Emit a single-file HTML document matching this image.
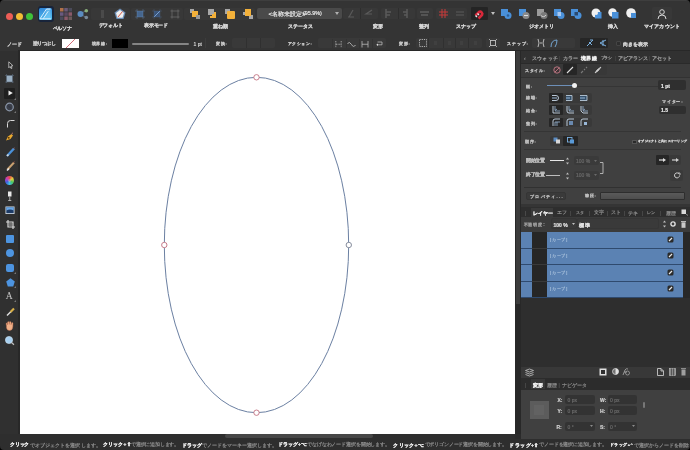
<!DOCTYPE html>
<html><head><meta charset="utf-8">
<style>
*{margin:0;padding:0;box-sizing:border-box}
html,body{width:690px;height:450px;overflow:hidden;background:#2b2b2b}
body{position:relative;font-family:"Liberation Sans",sans-serif;color:#d8d8d8}
#root{position:absolute;left:0;top:0;width:690px;height:450px;will-change:transform}
.a{position:absolute}
svg{position:absolute;overflow:visible}
.lbl{position:absolute;white-space:nowrap;font-size:5px;line-height:6px;color:#d6d6d6;font-weight:bold}
.tx{position:absolute;white-space:nowrap;font-size:5px;line-height:6px;color:#c8c8c8}
.grp{position:absolute;background:#3a3a3a;border-radius:2px}
.dk{position:absolute;background:#252525;border-radius:1px}
.st{top:441.6px;white-space:nowrap;font-size:5px;line-height:6px;color:#8e8e8e}
.b1{font-weight:bold;color:#f0f0f0}
.lbl,.tx,.st{-webkit-text-stroke:0.2px currentColor}
.fld{position:absolute;background:#303030;border-radius:2px}
</style></head><body><div id="root">

<!-- ================= TOP TOOLBAR ================= -->
<div class="a" style="left:0;top:0;width:690px;height:51px;background:#343434"></div>
<div class="a" style="left:0;top:0;width:690px;height:1px;background:#3e3e3e"></div>
<!-- window corners -->
<svg style="left:0;top:0" width="4" height="4"><path d="M0 0 H4 A4 4 0 0 0 0 4 Z" fill="#000"/></svg>
<svg style="left:686px;top:0" width="4" height="4"><path d="M4 0 H0 A4 4 0 0 1 4 4 Z" fill="#000"/></svg>
<!-- traffic lights -->
<div class="a" style="left:6px;top:13px;width:7px;height:7px;border-radius:50%;background:#ed5d56"></div>
<div class="a" style="left:16px;top:13px;width:7px;height:7px;border-radius:50%;background:#f3bd35"></div>
<div class="a" style="left:26px;top:13px;width:7px;height:7px;border-radius:50%;background:#3fc13a"></div>
<!-- app icon -->
<div class="a" style="left:37.6px;top:6px;width:16.2px;height:15.8px;border-radius:3px;background:#18243a"></div>
<div class="a" style="left:39.1px;top:7.6px;width:12.7px;height:12.1px;border-radius:1.5px;background:linear-gradient(170deg,#2f86d8,#58c4f2)"></div>
<svg style="left:39.1px;top:7.6px" width="13" height="12"><path d="M7.5 1 H11.5 V10.8 H5 Z" fill="#7fd0f8" opacity="0.55"/><path d="M1 10.8 L7.5 1 H11.5 M4 10.8 L9.3 3.2 M1 10.8 H11.8" stroke="#e6f6ff" stroke-width="0.9" fill="none"/></svg>

<!-- persona grid -->
<svg style="left:60px;top:8px" width="12" height="12">
<rect x="0" y="0" width="3.5" height="3.5" fill="#b0704a"/><rect x="4.3" y="0" width="3.5" height="3.5" fill="#6a5a78"/><rect x="8.5" y="0" width="3.5" height="3.5" fill="#4a4a5a"/>
<rect x="0" y="4.3" width="3.5" height="3.5" fill="#6a5a80"/><rect x="4.3" y="4.3" width="3.5" height="3.5" fill="#5a4a60"/><rect x="8.5" y="4.3" width="3.5" height="3.5" fill="#8a5a6a"/>
<rect x="0" y="8.5" width="3.5" height="3.5" fill="#4a4a5a"/><rect x="4.3" y="8.5" width="3.5" height="3.5" fill="#8a5a6a"/><rect x="8.5" y="8.5" width="3.5" height="3.5" fill="#6a5a5a"/>
</svg>
<!-- share -->
<svg style="left:77px;top:8px" width="12" height="12">
<path d="M3.5 6 L9 2.5 M3.5 6 L9 9.5" stroke="#5a6a78" stroke-width="1"/>
<circle cx="3.5" cy="6" r="3" fill="#5a8cc0"/><circle cx="9.3" cy="2.7" r="1.8" fill="#8ab07a"/><circle cx="9.3" cy="9.5" r="1.8" fill="#7a8a98"/>
</svg>
<!-- default group -->
<div class="grp" style="left:91px;top:8px;width:39px;height:12px;background:#383838"></div>
<div class="a" style="left:101px;top:10px;width:3px;height:8px;background:#4a4a4a"></div>
<svg style="left:114px;top:7.5px" width="12" height="12">
<path d="M6 0.5 L11.5 4.5 L9.5 11 L2.5 11 L0.5 4.5 Z" fill="#6d8fb8"/>
<path d="M6 2 L10 5 L8.6 9.8 L3.4 9.8 L2 5 Z" fill="#f0f0f0"/>
<path d="M4 9 L8.5 3.5" stroke="#d85a4a" stroke-width="1"/>
</svg>
<!-- view mode -->
<div class="grp" style="left:131px;top:8px;width:52px;height:12px;background:#383838"></div>
<svg style="left:134.5px;top:8.5px" width="10" height="10">
<rect x="2" y="2" width="6" height="6" fill="#46668e"/>
<path d="M0.5 2 H9.5 M0.5 8 H9.5 M2 0.5 V9.5 M8 0.5 V9.5" stroke="#6a90c0" stroke-width="0.7" stroke-dasharray="1 1"/>
</svg>
<svg style="left:151.5px;top:8.5px" width="10" height="10">
<rect x="2" y="2" width="6" height="6" fill="#3a5478"/>
<path d="M2 8 L8 2" stroke="#7aa0d0" stroke-width="1"/>
<path d="M0.5 2 H9.5 M0.5 8 H9.5 M2 0.5 V9.5 M8 0.5 V9.5" stroke="#50709a" stroke-width="0.6" stroke-dasharray="1 1"/>
</svg>
<svg style="left:169.5px;top:8.5px" width="10" height="10">
<path d="M0.5 2 H9.5 M0.5 8 H9.5 M2 0.5 V9.5 M8 0.5 V9.5" stroke="#6a6a6a" stroke-width="0.8"/>
</svg>

<!-- arrange -->
<div class="grp" style="left:184px;top:7.5px;width:71px;height:12px;background:#383838"></div>
<svg style="left:190px;top:9px" width="10" height="10">
<rect x="0" y="0" width="4" height="4" fill="#a8a8a8"/><rect x="2" y="2" width="6" height="6" fill="#f3b13a"/><rect x="6" y="6" width="4" height="4" fill="#9a9a9a"/>
</svg>
<svg style="left:208px;top:9px" width="10" height="10">
<rect x="0" y="0" width="6" height="6" fill="#a8a8a8"/><path d="M7 3 V8 H2" stroke="#f3b13a" stroke-width="2" fill="none"/><rect x="4" y="5" width="4" height="3" fill="#f3b13a"/>
</svg>
<svg style="left:225px;top:9px" width="10" height="10">
<rect x="0" y="0" width="5" height="5" fill="#a8a8a8"/><rect x="2" y="2" width="8" height="8" rx="1" fill="#f3b13a"/>
</svg>
<svg style="left:243px;top:9px" width="10" height="10">
<rect x="2" y="0" width="6" height="6" fill="#f3b13a"/><rect x="0" y="3" width="3" height="3" fill="#a8a8a8"/><rect x="6" y="6" width="4" height="4" fill="#a8a8a8"/><rect x="2" y="2" width="6" height="5" fill="#f3b13a"/>
</svg>

<!-- document dropdown -->
<div class="a" style="left:257px;top:8px;width:85px;height:11px;background:#4a4a4a;border-radius:2px"></div>
<div class="tx" style="font-size:6px;left:268.6px;top:10.8px;color:#e4e4e4;">&lt;名称未設定&gt;</div>
<div class="tx" style="font-size:5.4px;left:303px;top:10.2px;color:#e4e4e4;">(95.9%)</div>
<svg style="left:335px;top:12px" width="4" height="3"><path d="M0 0 H4 L2 3 Z" fill="#b0b0b0"/></svg>

<!-- transform (dim) -->
<div class="grp" style="left:343px;top:8px;width:35px;height:11px;background:#383838"></div>
<div class="a" style="left:360px;top:8px;width:1px;height:11px;background:#2e2e2e"></div>
<svg style="left:347px;top:9px" width="8" height="9"><path d="M6 1 L2 8 M1 8 H7" stroke="#5a5a5a" stroke-width="1.2"/></svg>
<svg style="left:365px;top:9px" width="8" height="9"><path d="M7 1 L1 5 L7 5" stroke="#5a5a5a" stroke-width="1.2" fill="none"/></svg>
<div class="grp" style="left:381px;top:8px;width:34px;height:11px;background:#383838"></div>
<div class="a" style="left:398px;top:8px;width:1px;height:11px;background:#2e2e2e"></div>
<svg style="left:384px;top:9px" width="8" height="9"><path d="M2 0 V9 M2 3 H7 M2 6 H6" stroke="#5a5a5a" stroke-width="1.5"/></svg>
<svg style="left:402px;top:9px" width="8" height="9"><path d="M5 0 V9 M1 3 H5 M2 6 H5" stroke="#5a5a5a" stroke-width="1.5"/></svg>
<div class="grp" style="left:417px;top:8px;width:16px;height:11px;background:#383838"></div>
<svg style="left:420px;top:10px" width="9" height="7"><path d="M0 2 H9 M1 5 H8" stroke="#5e5e5e" stroke-width="1.5"/></svg>

<!-- snap -->
<div class="grp" style="left:436px;top:8px;width:31px;height:11px;background:#383838"></div>
<svg style="left:439px;top:9px" width="9" height="9"><path d="M3 0 V9 M6 0 V9 M0 3 H9 M0 6 H9" stroke="#c83a3a" stroke-width="1"/></svg>
<svg style="left:456px;top:11px" width="8" height="5"><path d="M0 1 H8 M0 4 H8" stroke="#5a5a5a" stroke-width="1"/></svg>
<div class="dk" style="left:471px;top:7px;width:17px;height:13px;background:#242424"></div>
<svg style="left:474px;top:8.5px" width="11" height="10">
<path d="M2.5 8.5 L6 5 A2.2 2.2 0 0 1 9 8 L5.5 11.5" stroke="#d8283a" stroke-width="2.6" fill="none" transform="translate(-1,-2)"/>
<path d="M1.5 6.5 L3 8 M3.5 4.5 L5 6" stroke="#e8e8e8" stroke-width="1.4"/>
</svg>
<svg style="left:491px;top:11.5px" width="4" height="3"><path d="M0 0 H4 L2 3 Z" fill="#c0c0c0"/></svg>

<!-- geometry -->
<svg style="left:501px;top:9px" width="11" height="10"><rect x="0" y="0" width="7" height="7" fill="#4a90d8"/><circle cx="7" cy="6.5" r="3.5" fill="#4a90d8"/><circle cx="7" cy="6.5" r="1.3" fill="#2b5f98"/></svg>
<svg style="left:519px;top:9px" width="11" height="10"><rect x="0" y="0" width="7" height="7" fill="#4a90d8"/><circle cx="7" cy="6.5" r="3.5" fill="#8a8a8a"/><path d="M5 6.5 H9" stroke="#e0e0e0" stroke-width="1"/></svg>
<svg style="left:537px;top:9px" width="11" height="10"><rect x="0" y="0" width="7" height="7" fill="#9a9a9a"/><circle cx="7" cy="6.5" r="3.5" fill="#7a7a7a"/><path d="M4 6.5 A3 3 0 0 0 9 6" stroke="#d0d0d0" stroke-width="1" fill="none"/></svg>
<svg style="left:554px;top:9px" width="11" height="10"><rect x="0" y="0" width="7" height="7" fill="#4a90d8"/><circle cx="7" cy="6.5" r="3.5" fill="#4a90d8"/><rect x="3.5" y="3" width="3.5" height="4" fill="#a8c8f0"/></svg>
<svg style="left:571px;top:9px" width="11" height="10"><rect x="0" y="0" width="7" height="7" fill="#4a90d8"/><circle cx="7" cy="6.5" r="3.5" fill="#4a90d8"/><rect x="3.5" y="3" width="3.5" height="3.5" fill="#2a4a70"/></svg>
<!-- insert -->
<svg style="left:591px;top:8px" width="11" height="11"><circle cx="5" cy="5" r="4.5" fill="#f0f0f0"/><rect x="4" y="4" width="6.5" height="6.5" fill="#4a90d8"/><circle cx="5" cy="5" r="2" fill="#f0f0f0"/></svg>
<svg style="left:608px;top:8px" width="11" height="11"><circle cx="4.5" cy="4.5" r="4.2" fill="#f0f0f0"/><rect x="4" y="4" width="6.5" height="6.5" fill="#4a90d8"/></svg>
<svg style="left:626px;top:8px" width="11" height="11"><circle cx="5" cy="5" r="4.8" fill="#f0f0f0"/><path d="M5 5 H10 V10 H5 Z" fill="#4a90d8"/></svg>
<!-- account -->
<div class="grp" style="left:652px;top:7px;width:20px;height:13px;background:#383838"></div>
<svg style="left:657px;top:8.5px" width="10" height="10"><circle cx="5" cy="3" r="2.3" fill="none" stroke="#d8d8d8" stroke-width="1"/><path d="M1 10 Q1 6 5 6 Q9 6 9 10" fill="none" stroke="#d8d8d8" stroke-width="1"/></svg>

<!-- top labels -->
<div class="lbl" style="font-size:7.00px;letter-spacing:-0.22px;--w:19.1px;left:52.5px;top:25.9px">ペルソナ</div>
<div class="lbl" style="font-size:7.00px;letter-spacing:-0.14px;--w:24.3px;left:98.5px;top:22.7px">デフォルト</div>
<div class="lbl" style="font-size:7.00px;letter-spacing:-0.20px;--w:24.0px;left:144px;top:22.7px">表示モード</div>
<div class="lbl" style="font-size:7.00px;letter-spacing:0.00px;--w:15.0px;left:213px;top:22.7px">重ね順</div>
<div class="lbl" style="font-size:7.00px;letter-spacing:0.04px;--w:25.2px;left:287.5px;top:22.7px">ステータス</div>
<div class="lbl" style="font-size:7.00px;letter-spacing:0.25px;--w:10.5px;left:373px;top:22.7px">変形</div>
<div class="lbl" style="font-size:7.00px;letter-spacing:0.30px;--w:10.6px;left:419px;top:22.7px">整列</div>
<div class="lbl" style="font-size:7.00px;letter-spacing:0.00px;--w:20.0px;left:455.5px;top:22.7px">スナップ</div>
<div class="lbl" style="font-size:7.00px;letter-spacing:0.06px;--w:25.3px;left:528.5px;top:22.7px">ジオメトリ</div>
<div class="lbl" style="font-size:7.00px;letter-spacing:0.10px;--w:10.2px;left:608px;top:22.7px">挿入</div>
<div class="lbl" style="font-size:7.00px;letter-spacing:0.14px;--w:36.0px;left:644px;top:22.7px">マイアカウント</div>

<!-- ================= CONTEXT TOOLBAR ================= -->
<div class="lbl" style="font-size:7.00px;letter-spacing:0.20px;--w:15.6px;left:7px;top:41px;color:#c8c8c8">ノード</div>
<div class="lbl" style="font-size:7.00px;letter-spacing:-0.46px;--w:22.7px;left:32.5px;top:41px;color:#c8c8c8">塗りつぶし</div>
<div class="a" style="left:62px;top:39px;width:17px;height:9px;background:#fff"></div>
<svg style="left:62px;top:39px" width="17" height="9"><path d="M4 9 L13 0" stroke="#d05a66" stroke-width="0.9"/></svg>
<div class="lbl" style="font-size:5.40px;letter-spacing:0.55px;--w:16.2px;left:91.5px;top:41px;color:#c8c8c8">境界線:</div>
<div class="a" style="left:112px;top:39px;width:16px;height:9px;background:#000"></div>
<div class="a" style="left:132px;top:43.2px;width:57px;height:1.6px;background:#858585;border-radius:1px"></div>
<div class="tx" style="left:193.5px;top:41px;color:#d0d0d0">1 pt</div>
<div class="a" style="left:205px;top:38px;width:1px;height:10px;background:#3c3c3c"></div>
<div class="lbl" style="font-size:5.11px;letter-spacing:0.50px;--w:11.5px;left:216px;top:41px;color:#c8c8c8">変換:</div>
<div class="grp" style="left:232px;top:38px;width:43px;height:10px;background:#393939"></div>
<div class="a" style="left:246px;top:38px;width:1px;height:10px;background:#303030"></div>
<div class="a" style="left:260px;top:38px;width:1px;height:10px;background:#303030"></div>
<div class="lbl" style="font-size:5.38px;letter-spacing:0.37px;--w:24.2px;left:288px;top:41px;color:#c8c8c8">アクション:</div>
<div class="grp" style="left:318px;top:38px;width:68px;height:10px;background:#393939"></div>
<div class="a" style="left:332px;top:39px;width:0.6px;height:9px;background:#333"></div>
<div class="a" style="left:345.5px;top:39px;width:0.6px;height:9px;background:#333"></div>
<div class="a" style="left:358.5px;top:39px;width:0.6px;height:9px;background:#333"></div>
<div class="a" style="left:372px;top:39px;width:0.6px;height:9px;background:#333"></div>
<svg style="left:335px;top:40.5px" width="7" height="6.5"><path d="M0.8 0 V6.5 M6.2 0 V6.5 M1 3.25 H6" stroke="#b8b8b8" stroke-width="0.8" stroke-dasharray="1 0.6"/></svg>
<svg style="left:347px;top:40.5px" width="9" height="6.5"><path d="M0.5 2.5 Q2.5 0 4.5 3.5 Q6.5 7 8.5 4" stroke="#b8b8b8" stroke-width="0.9" fill="none"/></svg>
<svg style="left:361px;top:40.5px" width="8" height="6.5"><path d="M1 0 V6.5 M7 0 V6.5 M1 3.25 H7" stroke="#b8b8b8" stroke-width="0.8"/></svg>
<svg style="left:376px;top:41px" width="7" height="5"><path d="M1.5 1 H6 V3.8 H1.5" stroke="#b8b8b8" stroke-width="0.8" fill="none"/><path d="M0.3 3.8 L2 2.6 L2 5 Z" fill="#e0e0e0"/></svg>
<div class="lbl" style="font-size:5.07px;letter-spacing:0.47px;--w:11.4px;left:399px;top:41px;color:#c8c8c8">変形:</div>
<div class="grp" style="left:416px;top:38px;width:66px;height:10px;background:#393939"></div>
<svg style="left:418.5px;top:39px" width="8" height="8"><rect x="0.5" y="0.5" width="7" height="7" fill="none" stroke="#bdbdbd" stroke-width="0.9" stroke-dasharray="1.2 1"/></svg>
<div class="a" style="left:428.3px;top:38px;width:0.7px;height:10px;background:#303030"></div>
<div class="a" style="left:443.3px;top:38px;width:0.7px;height:10px;background:#303030"></div>
<div class="a" style="left:455px;top:38px;width:0.7px;height:10px;background:#303030"></div>
<div class="a" style="left:468px;top:38px;width:0.7px;height:10px;background:#303030"></div>
<div class="a" style="left:434px;top:41px;width:3px;height:4px;background:#404040"></div>
<div class="a" style="left:448px;top:41px;width:3px;height:4px;background:#404040"></div>
<div class="a" style="left:460px;top:41px;width:3px;height:4px;background:#404040"></div>
<div class="a" style="left:474px;top:41px;width:3px;height:4px;background:#404040"></div>
<div class="grp" style="left:486px;top:38px;width:14px;height:10px;background:#393939"></div>
<svg style="left:489px;top:39px" width="8" height="8"><rect x="1.5" y="1.5" width="5" height="5" fill="none" stroke="#c0c0c0" stroke-width="0.9"/><path d="M0 0 L2 2 M8 0 L6 2 M0 8 L2 6 M8 8 L6 6" stroke="#c0c0c0" stroke-width="0.8"/></svg>
<div class="lbl" style="font-size:7.00px;letter-spacing:-0.06px;--w:21.7px;left:507px;top:41px;color:#c8c8c8">スナップ:</div>
<div class="grp" style="left:532px;top:38px;width:43px;height:10px;background:#393939"></div>
<svg style="left:537px;top:39px" width="8" height="8"><path d="M1 0 Q3 4 1 8 M7 0 Q5 4 7 8 M3 4 H5" stroke="#c8c8c8" stroke-width="0.9" fill="none"/></svg>
<svg style="left:550px;top:39px" width="8" height="8"><path d="M1 8 Q1 1 7 1 Q7 5 5 8" stroke="#7ab0e0" stroke-width="0.9" fill="none"/></svg>
<div class="dk" style="left:580px;top:38px;width:28px;height:10px;background:#262626"></div>
<svg style="left:586px;top:39px" width="8" height="8"><path d="M1 7 L7 1 M3 3 L6 6 M7 1 L4 1" stroke="#7ab0e0" stroke-width="1" fill="none"/></svg>
<svg style="left:599px;top:39px" width="8" height="8"><path d="M7 7 L1 4 L7 1 M4 1 V7" stroke="#7ab0e0" stroke-width="1" fill="none"/></svg>
<div class="a" style="left:615.5px;top:40.5px;width:5px;height:5px;border:0.6px solid #444;border-radius:1px;background:#2e2e2e"></div>
<div class="lbl" style="font-size:7.00px;letter-spacing:0.04px;--w:25.2px;left:623px;top:41px;color:#d0d0d0">向きを表示</div>

<!-- ================= TOOLS PANEL ================= -->
<div class="a" style="left:0;top:51px;width:20px;height:383px;background:#303030"></div>
<div class="a" style="left:18px;top:50px;width:2px;height:384px;background:#282828"></div>
<div class="a" style="left:18px;top:49.6px;width:672px;height:1.4px;background:#282828"></div>
<!-- move -->
<svg style="left:7.5px;top:61px" width="6" height="8"><path d="M0.8 0.8 L5 4.8 L3 5 L4 7.2 L3 7.5 L2 5.5 L0.8 6.8 Z" fill="#222" stroke="#bbb" stroke-width="0.9"/></svg>
<!-- artboard -->
<svg style="left:5px;top:74px" width="9" height="9"><rect x="1.5" y="1.5" width="6" height="6.5" fill="#9ab0c4"/><path d="M0 1.5 H9 M0 8 H9 M1.5 0 V9 M7.5 0 V9" stroke="#5a6a7a" stroke-width="0.6"/></svg>
<!-- node (selected) -->
<div class="a" style="left:4px;top:88px;width:11px;height:10.5px;background:#1f1f1f;border-radius:1px"></div>
<svg style="left:7.5px;top:90px" width="5" height="6"><path d="M0.5 0.5 L4.8 3 L0.5 5.5 Z" fill="#f0f0f0"/></svg>
<svg style="left:14px;top:98px" width="2" height="2"><path d="M2 0 V2 H0 Z" fill="#777"/></svg>
<!-- contour -->
<svg style="left:5px;top:102px" width="9" height="10"><circle cx="4.5" cy="5" r="3.8" fill="#3a3e48" stroke="#8a96a8" stroke-width="1.2"/><path d="M3 3.5 L6 6.5" stroke="#2a3040" stroke-width="1"/></svg>
<svg style="left:13.5px;top:110.5px" width="2" height="2"><path d="M2 0 V2 H0 Z" fill="#777"/></svg>
<!-- corner -->
<svg style="left:6px;top:119px" width="9" height="9"><path d="M1.5 8.5 V4.5 Q1.5 1.5 4.5 1.5 H8.5" stroke="#d8d8d8" stroke-width="1" fill="none"/></svg>
<!-- pen -->
<svg style="left:5px;top:132px" width="9" height="10"><path d="M1 8.5 L3 4.5 L6.5 2 L8 3.5 L5.5 7 Z" fill="#e8a830"/><circle cx="3.8" cy="5.8" r="0.9" fill="#503000"/><path d="M6.5 2 L8 0.8" stroke="#b07070" stroke-width="1"/></svg>
<!-- pencil -->
<svg style="left:5.5px;top:147px" width="9" height="10"><path d="M1 9 L8 1.5" stroke="#4a90d8" stroke-width="2.4"/><path d="M1 9 L2.5 7.5" stroke="#d8d8d8" stroke-width="1.6"/><path d="M7.5 1.5 L8.5 0.8" stroke="#a06060" stroke-width="1"/></svg>
<!-- brush -->
<svg style="left:5.5px;top:161px" width="9" height="10"><path d="M1.5 8.5 L8 1.5" stroke="#c8a070" stroke-width="2"/><path d="M1 9.5 L3 7.5" stroke="#e8e8e8" stroke-width="1.6"/><path d="M7.5 1.5 L8.5 0.5" stroke="#904040" stroke-width="1"/></svg>
<!-- color wheel -->
<div class="a" style="left:5.3px;top:176.2px;width:8.8px;height:8.8px;border-radius:50%;background:conic-gradient(#e84a4a,#e8d040,#4ac860,#40c0e0,#4060e0,#c040c0,#e84a4a)"></div>
<div class="a" style="left:8.2px;top:179.1px;width:3px;height:3px;border-radius:50%;background:#b8b0c0;opacity:.6"></div>
<!-- transparency -->
<svg style="left:7px;top:191px" width="6" height="10"><rect x="1" y="0.5" width="3.5" height="5" fill="#e8e8e8"/><path d="M2.75 5.5 V9.5 M1.2 9.5 H4.3" stroke="#c8c8c8" stroke-width="0.8"/></svg>
<!-- place image -->
<svg style="left:4.5px;top:205.5px" width="10" height="9"><rect x="0.5" y="0.5" width="9" height="7.5" fill="#d8e0e8"/><rect x="1.3" y="1.3" width="7.4" height="5.9" fill="#1c3a66"/><path d="M1.3 4.5 Q5 2.5 8.7 4.5 V1.3 H1.3 Z" fill="#6aa8e8"/></svg>
<!-- crop -->
<svg style="left:5.5px;top:219.5px" width="9" height="9"><path d="M2 0 V7 H9 M0 2 H7 V9" stroke="#d8d8d8" stroke-width="1.2" fill="none"/><rect x="3" y="3" width="3" height="3" fill="#707070"/></svg>
<!-- rect -->
<div class="a" style="left:6px;top:235.3px;width:8px;height:8px;background:#4d94e0;border-radius:1px"></div>
<!-- ellipse -->
<div class="a" style="left:6px;top:249.3px;width:8px;height:8px;background:#4d94e0;border-radius:50%"></div>
<!-- rounded rect -->
<div class="a" style="left:6px;top:264px;width:8px;height:8px;background:#4d94e0;border-radius:2px"></div>
<svg style="left:14px;top:272px" width="2" height="2"><path d="M2 0 V2 H0 Z" fill="#777"/></svg>
<!-- polygon -->
<svg style="left:5.5px;top:278px" width="9" height="9"><path d="M4.5 0.3 L8.8 3.4 L7.2 8.5 L1.8 8.5 L0.2 3.4 Z" fill="#4d94e0"/></svg>
<svg style="left:14px;top:286px" width="2" height="2"><path d="M2 0 V2 H0 Z" fill="#777"/></svg>
<!-- text -->
<div class="a" style="left:5.8px;top:292px;font:9.5px/9px 'Liberation Serif',serif;color:#c8c8c8">A</div>
<svg style="left:14px;top:300px" width="2" height="2"><path d="M2 0 V2 H0 Z" fill="#777"/></svg>
<!-- eyedropper -->
<svg style="left:5.5px;top:306.5px" width="9" height="9"><path d="M1 8.5 L5 4.5" stroke="#e0e0e0" stroke-width="1.4"/><path d="M4.5 5 L8 1.5" stroke="#d8b048" stroke-width="2.2"/></svg>
<!-- hand -->
<svg style="left:5px;top:321px" width="9" height="10"><path d="M1.5 5 L1 2.5 Q1.5 1.5 2.3 2.5 L2.5 4 L2.6 1 Q3.3 0 4 1 L4.2 3.5 L4.5 0.8 Q5.3 0 6 1 L6 3.8 L6.7 1.8 Q7.5 1.3 8 2 L7.8 6 Q7.5 9.5 4.5 9.5 Q2 9.5 1.5 7 Z" fill="#f0b088" stroke="#c07050" stroke-width="0.4"/></svg>
<!-- zoom -->
<svg style="left:5px;top:335.5px" width="10" height="9"><circle cx="4" cy="4" r="3.6" fill="#a8d0f0" stroke="#d0e8f8" stroke-width="0.6"/><path d="M6.5 6.5 L9 8.8" stroke="#c0c0c0" stroke-width="1.2"/></svg>
<!-- ================= CANVAS ================= -->
<div class="a" style="left:20px;top:51px;width:494.5px;height:382.8px;background:#ffffff"></div>
<svg style="left:0;top:0" width="690" height="450">
<ellipse cx="256.5" cy="245" rx="92.2" ry="167.7" fill="none" stroke="#6b80a2" stroke-width="1"/>
<circle cx="256.5" cy="77.3" r="2.7" fill="#fff" stroke="#c27080" stroke-width="0.9"/>
<circle cx="164.3" cy="245" r="2.7" fill="#fff" stroke="#c27080" stroke-width="0.9"/>
<circle cx="348.8" cy="245" r="2.7" fill="#fff" stroke="#7b8294" stroke-width="0.9"/>
<circle cx="256.5" cy="412.7" r="2.7" fill="#fff" stroke="#c27080" stroke-width="0.9"/>
</svg>

<!-- ================= RIGHT PANEL ================= -->
<div class="a" style="left:514.5px;top:51px;width:176px;height:383px;background:#282828"></div>
<div class="a" style="left:516px;top:51px;width:3.5px;height:253px;background:#3c3c3c"></div>
<!-- stroke panel -->
<div class="a" style="left:521px;top:51px;width:169px;height:11.5px;background:#313131"></div>
<div class="a" style="left:521px;top:62.5px;width:169px;height:1px;background:#2a2a2a"></div>
<div class="a" style="left:521px;top:63.5px;width:169px;height:13.5px;background:#3b3b3b"></div>
<div class="a" style="left:521px;top:77px;width:169px;height:1px;background:#323232"></div>
<div class="a" style="left:521px;top:78px;width:169px;height:126px;background:#404040"></div>
<div class="tx" style="left:524px;top:54.5px;color:#8a8a8a">‹</div>
<div class="tx" style="font-size:7.00px;letter-spacing:0.20px;--w:26.0px;left:532px;top:54.5px;color:#acacac">スウォッチ</div>
<div class="tx" style="left:559px;top:54.5px;color:#484848">|</div>
<div class="tx" style="font-size:7.00px;letter-spacing:0.23px;--w:15.7px;left:562.5px;top:54.5px;color:#acacac">カラー</div>
<div class="lbl" style="font-size:7.00px;letter-spacing:0.40px;--w:16.2px;left:581px;top:54.5px;color:#f0f0f0">境界線</div>
<div class="tx" style="font-size:4.93px;letter-spacing:-0.30px;--w:11.1px;left:600.5px;top:54.5px;color:#acacac">ブラシ</div>
<div class="tx" style="left:615px;top:54.5px;color:#484848">|</div>
<div class="tx" style="font-size:7.00px;letter-spacing:0.00px;--w:30.0px;left:618px;top:54.5px;color:#acacac">アピアランス</div>
<div class="tx" style="left:649px;top:54.5px;color:#484848">|</div>
<div class="tx" style="font-size:7.00px;letter-spacing:0.05px;--w:20.2px;left:652px;top:54.5px;color:#acacac">アセット</div>

<div class="lbl" style="font-size:5.47px;letter-spacing:0.50px;--w:20.5px;left:525px;top:67.5px;color:#bdbdbd">スタイル:</div>
<div class="grp" style="left:551px;top:64px;width:56px;height:11px;background:#383838"></div>
<svg style="left:552.5px;top:66px" width="8" height="8"><circle cx="4" cy="4" r="3.2" fill="#3e3436" stroke="#b87480" stroke-width="1"/><path d="M1.8 6.2 L6.2 1.8" stroke="#b87480" stroke-width="1"/></svg>
<div class="dk" style="left:563px;top:64px;width:14px;height:11px;background:#262626"></div>
<svg style="left:566px;top:65.5px" width="8" height="8"><path d="M1 7 L7 1" stroke="#e0e0e0" stroke-width="1.1"/></svg>
<svg style="left:580px;top:65.5px" width="8" height="8"><path d="M1 7 L3 5 M4 4 L5 3 M6 2 L7 1" stroke="#7a7a7a" stroke-width="1.1"/></svg>
<svg style="left:593.5px;top:65.5px" width="8" height="8"><path d="M1 7 Q3 3 7 1 Q5 5 1 7 Z" fill="#cfcfcf" stroke="#cfcfcf" stroke-width="0.8"/></svg>

<div class="lbl" style="font-size:4.67px;letter-spacing:0.50px;--w:7.0px;left:526px;top:83.7px;color:#bdbdbd">幅:</div>
<div class="a" style="left:547px;top:85px;width:27px;height:1.2px;background:#6d8fb8"></div>
<div class="a" style="left:574px;top:85.8px;width:84px;height:1px;background:#353535"></div>
<div class="a" style="left:571.5px;top:83px;width:5px;height:5px;border-radius:50%;background:#f2f2f2"></div>
<div class="fld" style="left:658px;top:80px;width:28px;height:10px;background:#2f2f2f"></div>
<div class="tx" style="left:661px;top:82.5px;color:#e8e8e8;font-weight:bold">1 pt</div>

<div class="lbl" style="font-size:5.16px;letter-spacing:0.53px;--w:11.6px;left:526px;top:94.9px;color:#bdbdbd">線端:</div>
<div class="lbl" style="font-size:5.16px;letter-spacing:0.53px;--w:11.6px;left:526px;top:108px;color:#bdbdbd">結合:</div>
<div class="lbl" style="font-size:5.16px;letter-spacing:0.53px;--w:11.6px;left:526px;top:120.5px;color:#bdbdbd">整列:</div>
<div class="grp" style="left:549px;top:93px;width:43px;height:9.5px;background:#393939"></div>
<div class="grp" style="left:549px;top:105px;width:43px;height:10px;background:#393939"></div>
<div class="grp" style="left:549px;top:117.5px;width:43px;height:9.5px;background:#393939"></div>
<div class="dk" style="left:549px;top:93px;width:14px;height:9.5px;background:#262626"></div>
<div class="dk" style="left:549px;top:105px;width:14px;height:10px;background:#262626"></div>
<div class="dk" style="left:549px;top:117.5px;width:14px;height:9.5px;background:#262626"></div>
<svg style="left:552px;top:94px" width="8" height="8"><path d="M0 1.5 H4 A2.5 2.5 0 0 1 4 6.5 H0" stroke="#c8d8e8" stroke-width="0.9" fill="none"/><path d="M0 4 H5" stroke="#9ab8d8" stroke-width="1"/></svg>
<svg style="left:566px;top:94px" width="8" height="8"><path d="M0 1.5 H6 V6.5 H0" stroke="#b8c8d8" stroke-width="0.9" fill="#35506a"/><path d="M0 4 H4" stroke="#9ab8d8" stroke-width="1"/></svg>
<svg style="left:580px;top:94px" width="8" height="8"><path d="M0 1.5 H7 V6.5 H0" stroke="#b8c8d8" stroke-width="0.9" fill="#35506a"/><path d="M0 4 H5" stroke="#9ab8d8" stroke-width="1"/></svg>
<svg style="left:552px;top:106px" width="8" height="8"><path d="M1 0 V7 H8" stroke="#c8d8e8" stroke-width="0.9" fill="none"/><path d="M3 0 V4.5 L5 3 M3 5 H8" stroke="#9ab8d8" stroke-width="0.8" fill="none"/></svg>
<svg style="left:566px;top:106px" width="8" height="8"><path d="M1 0 V5 Q1 7 3 7 H8" stroke="#c8d8e8" stroke-width="0.9" fill="none"/><path d="M3 0 V4.5 L5 3 M3 5 H8" stroke="#9ab8d8" stroke-width="0.8" fill="none"/></svg>
<svg style="left:580px;top:106px" width="8" height="8"><path d="M1 0 V5 L3 7 H8" stroke="#c8d8e8" stroke-width="0.9" fill="none"/><path d="M3 0 V4.5 L5 3 M3 5 H8" stroke="#9ab8d8" stroke-width="0.8" fill="none"/></svg>
<svg style="left:552px;top:118px" width="8" height="8"><path d="M1 8 V3 Q1 1 3 1 H8" stroke="#c8d8e8" stroke-width="0.9" fill="none"/><path d="M3 8 V4 H8 M5 4 V8" stroke="#9ab8d8" stroke-width="0.8" fill="none"/></svg>
<svg style="left:566px;top:118px" width="8" height="8"><path d="M1 8 V3 Q1 1 3 1 H8" stroke="#c8d8e8" stroke-width="0.9" fill="none"/><rect x="3" y="3" width="4" height="4" fill="#6a8ab0"/></svg>
<svg style="left:580px;top:118px" width="8" height="8"><path d="M1 8 V3 Q1 1 3 1 H8" stroke="#c8d8e8" stroke-width="0.9" fill="none"/><rect x="4" y="4" width="3" height="3" fill="#9ab8d8"/></svg>
<div class="lbl" style="font-size:7.00px;letter-spacing:-0.12px;--w:21.4px;left:662px;top:98.5px;color:#bdbdbd">マイター:</div>
<div class="fld" style="left:658.5px;top:106px;width:27px;height:7.5px;background:#2f2f2f"></div>
<div class="tx" style="left:661px;top:106.8px;color:#e8e8e8;font-weight:bold">1.5</div>

<div class="a" style="left:524px;top:130.5px;width:157px;height:1px;background:#353535"></div>
<div class="lbl" style="font-size:5.20px;letter-spacing:0.57px;--w:11.7px;left:525px;top:139px;color:#bdbdbd">順序:</div>
<div class="grp" style="left:549.5px;top:135.5px;width:28.5px;height:10px;background:#393939"></div>
<div class="dk" style="left:563px;top:135.5px;width:15px;height:10px;background:#262626"></div>
<svg style="left:552.5px;top:137px" width="8" height="7"><rect x="0.5" y="0.5" width="4" height="4" fill="#5a8ac0"/><rect x="3" y="2.5" width="4" height="4" fill="#d8d8d8"/></svg>
<svg style="left:566.5px;top:137px" width="8" height="7"><rect x="0.5" y="0.5" width="4.5" height="4.5" fill="none" stroke="#7ab0e0" stroke-width="0.9"/><rect x="3" y="2.5" width="4" height="4" fill="#5a9ad8"/></svg>
<div class="a" style="left:632px;top:139.5px;width:4.5px;height:4px;background:#2a2a2a;border:0.8px solid #555"></div>
<div class="tx" style="font-size:4.37px;letter-spacing:0.28px;--w:49.2px;left:638px;top:139px;color:#d8d8d8;line-height:4px;font-weight:bold">オブジェクトと共にスケーリング</div>
<div class="a" style="left:524px;top:148.5px;width:157px;height:1px;background:#353535"></div>

<div class="lbl" style="font-size:7.00px;letter-spacing:-0.33px;--w:18.7px;left:526px;top:157.5px;color:#bdbdbd;">開始位置</div>
<div class="lbl" style="font-size:7.00px;letter-spacing:-0.50px;--w:18.0px;left:526px;top:172px;color:#bdbdbd;">終了位置</div>
<div class="a" style="left:549.5px;top:159.5px;width:14px;height:1.2px;background:#e8e8e8"></div>
<div class="a" style="left:546px;top:174.5px;width:14px;height:1.2px;background:#bdbdbd"></div>
<svg style="left:565.5px;top:156.5px" width="3" height="8"><path d="M0 2.5 L1.5 0.5 L3 2.5 M0 5.5 L1.5 7.5 L3 5.5" fill="#bdbdbd"/></svg>
<svg style="left:565.5px;top:171.5px" width="3" height="8"><path d="M0 2.5 L1.5 0.5 L3 2.5 M0 5.5 L1.5 7.5 L3 5.5" fill="#bdbdbd"/></svg>
<div class="fld" style="left:573.5px;top:156px;width:25px;height:9px;background:#3a3a3a"></div>
<div class="fld" style="left:573.5px;top:170.5px;width:25px;height:9px;background:#3a3a3a"></div>
<div class="tx" style="left:576px;top:157.5px;color:#6a6a6a">100 %</div>
<div class="tx" style="left:576px;top:172px;color:#6a6a6a">100 %</div>
<svg style="left:593.5px;top:159.5px" width="3" height="2"><path d="M0 0 H3 L1.5 2 Z" fill="#6a6a6a"/></svg>
<svg style="left:593.5px;top:174px" width="3" height="2"><path d="M0 0 H3 L1.5 2 Z" fill="#6a6a6a"/></svg>
<svg style="left:600px;top:161.5px" width="4" height="12"><path d="M0 0.5 H3 V11.5 H0" stroke="#bdbdbd" stroke-width="0.9" fill="none"/></svg>
<div class="dk" style="left:656px;top:154.5px;width:13px;height:10px;background:#262626"></div>
<div class="grp" style="left:669px;top:154.5px;width:12px;height:10px;background:#393939"></div>
<svg style="left:659px;top:157.5px" width="7" height="4"><path d="M0 2 H4" stroke="#e0e0e0" stroke-width="1.2"/><path d="M4 0 L7 2 L4 4 Z" fill="#e0e0e0"/></svg>
<svg style="left:672px;top:157.5px" width="7" height="4"><path d="M0 2 H4" stroke="#d0d0d0" stroke-width="1.2"/><path d="M4 0 L7 2 L4 4 Z" fill="#d0d0d0"/></svg>
<div class="grp" style="left:670px;top:169.5px;width:13px;height:11px;background:#3a3a3a"></div>
<svg style="left:673.5px;top:172px" width="6" height="6"><path d="M5.2 2.2 A2.5 2.5 0 1 0 5.5 3.5" stroke="#d0d0d0" stroke-width="1" fill="none"/><path d="M4 1 L6 1 L6 3" stroke="#d0d0d0" stroke-width="0.8" fill="none"/></svg>

<div class="a" style="left:524px;top:187px;width:157px;height:1px;background:#313131"></div>
<div class="a" style="left:525.5px;top:191.5px;width:40.5px;height:8.5px;background:#3a3a3a;border:0.8px solid #353535;border-radius:2px"></div>
<div class="tx" style="font-size:7.00px;letter-spacing:0.38px;--w:34.0px;left:530px;top:193.8px;color:#b8b8b8;font-weight:bold">プロパティ...</div>
<div class="lbl" style="font-size:5.51px;letter-spacing:0.80px;--w:12.4px;left:584.5px;top:193px;color:#bdbdbd">筆圧:</div>
<div class="a" style="left:599.5px;top:191.5px;width:85px;height:8px;background:linear-gradient(#5a5a5a,#4e4e4e);border:0.8px solid #2e2e2e;border-radius:1px"></div>

<!-- layers panel -->
<div class="a" style="left:521px;top:203.5px;width:169px;height:3.5px;background:#353535"></div>
<div class="a" style="left:521px;top:207px;width:169px;height:9.5px;background:#2e2e2e"></div>
<div class="a" style="left:530.5px;top:207.5px;width:22.5px;height:9px;background:#3a3a3a"></div>
<div class="tx" style="left:525px;top:209.5px;color:#5a5a5a">|</div>
<div class="lbl" style="font-size:7.00px;letter-spacing:0.08px;--w:20.3px;left:532.5px;top:209.5px;color:#f0f0f0">レイヤー</div>
<div class="tx" style="font-size:7.00px;letter-spacing:-0.50px;--w:9.0px;left:557px;top:209.5px;color:#8a8a8a">エフ</div>
<div class="tx" style="left:570px;top:209.5px;color:#555">|</div>
<div class="tx" style="font-size:5.33px;letter-spacing:0.00px;--w:8.0px;left:576px;top:209.5px;color:#8a8a8a">スタ</div>
<div class="tx" style="left:589px;top:209.5px;color:#555">|</div>
<div class="tx" style="font-size:7.00px;letter-spacing:-0.15px;--w:9.7px;left:594px;top:209.5px;color:#8a8a8a">文字</div>
<div class="tx" style="left:607px;top:209.5px;color:#555">|</div>
<div class="tx" style="font-size:7.00px;letter-spacing:-0.50px;--w:9.0px;left:611px;top:209.5px;color:#8a8a8a">スト</div>
<div class="tx" style="left:624px;top:209.5px;color:#555">|</div>
<div class="tx" style="font-size:7.00px;letter-spacing:0.35px;--w:10.7px;left:628px;top:209.5px;color:#8a8a8a">テキ</div>
<div class="tx" style="left:642px;top:209.5px;color:#555">|</div>
<div class="tx" style="font-size:7.00px;letter-spacing:-0.70px;--w:8.6px;left:647px;top:209.5px;color:#8a8a8a">レン</div>
<div class="tx" style="left:660px;top:209.5px;color:#555">|</div>
<div class="tx" style="font-size:7.00px;letter-spacing:0.20px;--w:10.4px;left:665.5px;top:209.5px;color:#8a8a8a">履歴</div>
<svg style="left:681px;top:208.5px" width="7" height="7"><rect x="0.5" y="0.5" width="4.5" height="4.5" fill="#d8d8d8"/><path d="M5.5 5 L6.5 6.5" stroke="#bbb" stroke-width="0.8"/></svg>

<div class="a" style="left:521px;top:216.5px;width:169px;height:15px;background:#3b3b3b"></div>
<div class="lbl" style="font-size:7.00px;letter-spacing:0.06px;--w:22.3px;left:523.5px;top:221.5px;color:#9a9a9a">不透明度:</div>
<div class="fld" style="left:550.5px;top:218px;width:26px;height:11px;background:#393939;border:0.6px solid #353535"></div>
<div class="tx" style="left:553.5px;top:221.5px;color:#e0e0e0;font-weight:bold">100 %</div>
<svg style="left:571.5px;top:223px" width="3" height="2"><path d="M0 0 H3 L1.5 2 Z" fill="#c0c0c0"/></svg>
<div class="fld" style="left:576.5px;top:218px;width:82px;height:11px;background:#3a3a3a;border:0.6px solid #363636"></div>
<div class="lbl" style="font-size:7.00px;letter-spacing:0.50px;--w:11.0px;left:579px;top:221.5px;color:#e0e0e0">標準</div>
<svg style="left:662.5px;top:220px" width="3" height="8"><path d="M0 2.5 L1.5 0.5 L3 2.5 M0 5.5 L1.5 7.5 L3 5.5" fill="#c0c0c0"/></svg>
<svg style="left:670px;top:221px" width="6" height="6"><circle cx="3" cy="3" r="2.1" fill="none" stroke="#e0e0e0" stroke-width="1.4"/></svg>
<svg style="left:681px;top:220.5px" width="5" height="7"><rect x="0.5" y="1.3" width="4" height="5.5" fill="#c8c8c8"/><rect x="0" y="0" width="5" height="0.9" fill="#c8c8c8"/></svg>

<div class="a" style="left:521px;top:231.5px;width:162px;height:65.5px;background:#5b82b3"></div>
<div class="a" style="left:521px;top:247.5px;width:162px;height:0.8px;background:#2f4a6e"></div>
<div class="a" style="left:521px;top:264px;width:162px;height:0.8px;background:#2f4a6e"></div>
<div class="a" style="left:521px;top:280.5px;width:162px;height:0.8px;background:#2f4a6e"></div>
<div class="a" style="left:521px;top:296.5px;width:162px;height:1px;background:#2f4a6e"></div>
<div class="a" style="left:531.5px;top:231.5px;width:15px;height:65px;background:#262626"></div>
<div class="a" style="left:531.5px;top:247.5px;width:15px;height:0.8px;background:#3a3a3a"></div>
<div class="a" style="left:531.5px;top:264px;width:15px;height:0.8px;background:#3a3a3a"></div>
<div class="a" style="left:531.5px;top:280.5px;width:15px;height:0.8px;background:#3a3a3a"></div>
<div class="tx" style="font-size:4.80px;letter-spacing:0.80px;--w:18.0px;left:550px;top:236.5px;color:#a8c0dc">[カーブ]</div>
<div class="tx" style="font-size:4.80px;letter-spacing:0.80px;--w:18.0px;left:550px;top:253px;color:#a8c0dc">[カーブ]</div>
<div class="tx" style="font-size:4.80px;letter-spacing:0.80px;--w:18.0px;left:550px;top:269.5px;color:#a8c0dc">[カーブ]</div>
<div class="tx" style="font-size:4.80px;letter-spacing:0.80px;--w:18.0px;left:550px;top:286px;color:#a8c0dc">[カーブ]</div>
<svg style="left:667px;top:235.5px" width="7" height="7"><rect x="0.5" y="0.5" width="6" height="6" rx="1.5" fill="#2a2a2a"/><path d="M2 5 L5 2" stroke="#e8e8e8" stroke-width="1.2"/></svg>
<svg style="left:667px;top:252px" width="7" height="7"><rect x="0.5" y="0.5" width="6" height="6" rx="1.5" fill="#2a2a2a"/><path d="M2 5 L5 2" stroke="#e8e8e8" stroke-width="1.2"/></svg>
<svg style="left:667px;top:268.5px" width="7" height="7"><rect x="0.5" y="0.5" width="6" height="6" rx="1.5" fill="#2a2a2a"/><path d="M2 5 L5 2" stroke="#e8e8e8" stroke-width="1.2"/></svg>
<svg style="left:667px;top:285px" width="7" height="7"><rect x="0.5" y="0.5" width="6" height="6" rx="1.5" fill="#2a2a2a"/><path d="M2 5 L5 2" stroke="#e8e8e8" stroke-width="1.2"/></svg>

<div class="a" style="left:521px;top:297.5px;width:169px;height:69px;background:#2e2e2e"></div>
<div class="a" style="left:521px;top:366.5px;width:169px;height:11.5px;background:#383838"></div>
<svg style="left:524.5px;top:368.5px" width="9" height="7"><path d="M0.5 1.5 L4.5 0 L8.5 1.5 L4.5 3 Z M0.5 3.5 L4.5 5 L8.5 3.5 M0.5 5.5 L4.5 7 L8.5 5.5" stroke="#c8c8c8" stroke-width="0.8" fill="none"/></svg>
<svg style="left:599px;top:368px" width="8" height="8"><rect x="0.5" y="0.5" width="7" height="7" fill="#e0e0e0"/><rect x="2" y="2" width="4" height="4" fill="#303030"/></svg>
<svg style="left:611.5px;top:368px" width="7" height="7"><circle cx="3.5" cy="3.5" r="3" fill="#707070" stroke="#d8d8d8" stroke-width="0.8"/><path d="M3.5 0.5 A3 3 0 0 1 3.5 6.5 Z" fill="#e0e0e0"/></svg>
<svg style="left:621.5px;top:368px" width="8" height="8"><path d="M1 7 L3 2 Q4 0 6 1 M2 4 H5" stroke="#a0a0a0" stroke-width="0.9" fill="none"/><circle cx="5.5" cy="5" r="2" fill="none" stroke="#a0a0a0" stroke-width="0.8"/></svg>
<svg style="left:657px;top:368px" width="7" height="8"><path d="M0.5 0.5 H4 L6.5 3 V7.5 H0.5 Z M4 0.5 V3 H6.5" stroke="#d8d8d8" stroke-width="0.8" fill="none"/></svg>
<svg style="left:669px;top:368px" width="7" height="8"><rect x="0.5" y="0.5" width="6" height="7" fill="#8a8a8a" stroke="#c0c0c0" stroke-width="0.6"/><path d="M2.5 0.5 V7.5 M4.5 0.5 V7.5" stroke="#404040" stroke-width="0.7"/></svg>
<svg style="left:681px;top:368px" width="5" height="8"><rect x="0.5" y="1.5" width="4" height="6" fill="#a0a0a0"/><rect x="0" y="0.2" width="5" height="0.8" fill="#a0a0a0"/></svg>

<div class="a" style="left:521px;top:378px;width:169px;height:11.5px;background:#2c2c2c"></div>
<div class="tx" style="left:525px;top:381.5px;color:#555">|</div>
<div class="a" style="left:530.5px;top:379px;width:14px;height:10px;background:#383838"></div>
<div class="lbl" style="font-size:7.00px;letter-spacing:0.05px;--w:10.1px;left:532.5px;top:381.5px;color:#f0f0f0">変形</div>
<div class="tx" style="font-size:7.00px;letter-spacing:0.00px;--w:10.0px;left:547px;top:381.5px;color:#8a8a8a">履歴</div>
<div class="tx" style="left:558.5px;top:381.5px;color:#555">|</div>
<div class="tx" style="font-size:7.00px;letter-spacing:0.06px;--w:25.3px;left:561.5px;top:381.5px;color:#8a8a8a">ナビゲータ</div>

<div class="a" style="left:521px;top:389.5px;width:169px;height:49.3px;background:#404040"></div>
<div class="a" style="left:529.5px;top:400.5px;width:19.5px;height:18px;background:#5c5c5c"></div>
<div class="a" style="left:534px;top:404.5px;width:10px;height:10px;background:#626262"></div>
<div class="lbl" style="left:557.5px;top:397px;color:#d0d0d0">X:</div>
<div class="lbl" style="left:557.5px;top:408px;color:#d0d0d0">Y:</div>
<div class="lbl" style="left:556.5px;top:424px;color:#d0d0d0">R:</div>
<div class="lbl" style="left:600px;top:397px;color:#d0d0d0">W:</div>
<div class="lbl" style="left:600px;top:408px;color:#d0d0d0">H:</div>
<div class="lbl" style="left:600px;top:424px;color:#d0d0d0">S:</div>
<div class="fld" style="left:565px;top:395px;width:30px;height:9px;background:#333"></div>
<div class="fld" style="left:565px;top:406px;width:30px;height:9px;background:#333"></div>
<div class="fld" style="left:565px;top:422px;width:30px;height:9px;background:#333"></div>
<div class="fld" style="left:607.5px;top:395px;width:29.5px;height:9px;background:#333"></div>
<div class="fld" style="left:607.5px;top:406px;width:29.5px;height:9px;background:#333"></div>
<div class="fld" style="left:607.5px;top:422px;width:29.5px;height:9px;background:#333"></div>
<div class="tx" style="left:567.5px;top:397px;color:#6a6a6a">0 px</div>
<div class="tx" style="left:567.5px;top:408px;color:#6a6a6a">0 px</div>
<div class="tx" style="left:567.5px;top:424px;color:#6a6a6a">0 °</div>
<div class="tx" style="left:610px;top:397px;color:#6a6a6a">0 px</div>
<div class="tx" style="left:610px;top:408px;color:#6a6a6a">0 px</div>
<div class="tx" style="left:610px;top:424px;color:#6a6a6a">0 °</div>
<svg style="left:589.5px;top:425px" width="3" height="2"><path d="M0 0 H3 L1.5 2 Z" fill="#8a8a8a"/></svg>
<svg style="left:632px;top:425px" width="3" height="2"><path d="M0 0 H3 L1.5 2 Z" fill="#8a8a8a"/></svg>
<div class="a" style="left:642.5px;top:401.5px;width:2.5px;height:6px;background:#777;border-radius:1px"></div>

<!-- ================= STATUS ================= -->
<div class="a" style="left:0;top:433.8px;width:514.5px;height:16.2px;background:#2e2e2e"></div>
<div class="a" style="left:0;top:438.8px;width:690px;height:11.2px;background:#2e2e2e"></div>
<div class="a" style="left:224.5px;top:433.8px;width:148px;height:4px;background:#474747;border-radius:2px"></div>
<div class="a st b1" style="font-size:7.00px;letter-spacing:-0.20px;--w:19.2px;left:10px">クリック</div>
<div class="a st" style="font-size:7.00px;letter-spacing:0.11px;--w:71.5px;left:29.5px">でオブジェクトを選択します。</div>
<div class="a st b1" style="font-size:7.00px;letter-spacing:-0.28px;--w:28.3px;left:102.5px">クリック+⇧</div>
<div class="a st" style="font-size:7.00px;letter-spacing:-0.20px;--w:48.0px;left:131px">で選択に追加します。</div>
<div class="a st b1" style="font-size:7.00px;letter-spacing:0.00px;--w:20.0px;left:181.7px">ドラッグ</div>
<div class="a st" style="font-size:7.00px;letter-spacing:-0.02px;--w:74.7px;left:202px">でノードをマーキー選択します。</div>
<div class="a st b1" style="font-size:7.00px;letter-spacing:-0.60px;--w:28.4px;left:278.3px">ドラッグ+⌥</div>
<div class="a st" style="font-size:7.00px;letter-spacing:-0.12px;--w:83.0px;left:307px">でなげなわノード選択を開始します。</div>
<div class="a st b1" style="font-size:7.00px;letter-spacing:-0.18px;--w:30.9px;left:393.3px">クリック+⌥</div>
<div class="a st" style="font-size:7.00px;letter-spacing:-0.16px;--w:82.2px;left:424.5px">でポリゴンノード選択を開始します。</div>
<div class="a st b1" style="font-size:7.00px;letter-spacing:0.00px;--w:30.0px;left:509px">ドラッグ+⇧</div>
<div class="a st" style="font-size:7.00px;letter-spacing:-0.19px;--w:67.4px;left:539.3px">でノードを選択に追加します。</div>
<div class="a st b1" style="font-size:5.18px;letter-spacing:0.22px;--w:23.3px;left:610px">ドラッグ+^</div>
<div class="a st" style="font-size:7.00px;letter-spacing:0.00px;--w:75.0px;left:633.5px">で選択からノードを削除します。</div>
<svg style="left:0;top:446px" width="4" height="4"><path d="M0 4 H4 A4 4 0 0 1 0 0 Z" fill="#000"/></svg>
<svg style="left:686px;top:446px" width="4" height="4"><path d="M4 4 H0 A4 4 0 0 0 4 0 Z" fill="#000"/></svg>

</div>
<script>
(function(){
try{
var p=document.createElement('span');
p.style.cssText='position:absolute;left:0;top:0;font:100px "Liberation Sans",sans-serif;white-space:nowrap;visibility:hidden';
p.textContent='\u3042';
document.body.appendChild(p);
var cjk=p.getBoundingClientRect().width>88;
document.body.removeChild(p);
if(!cjk)return;
var els=document.querySelectorAll('.lbl,.tx,.st');
for(var i=0;i<els.length;i++){
var e=els[i];var w=parseFloat(getComputedStyle(e).getPropertyValue('--w'));
if(!(w>0))continue;
var n=e.textContent.length;
var fs=Math.min(5.2,w/n);
e.style.fontSize=fs+'px';
e.style.letterSpacing='0px';
var r=document.createRange();r.selectNodeContents(e);
var nat=r.getBoundingClientRect().width;
e.style.letterSpacing=((w-nat)/n)+'px';
}
}catch(err){}
})();
</script>
</body></html>
